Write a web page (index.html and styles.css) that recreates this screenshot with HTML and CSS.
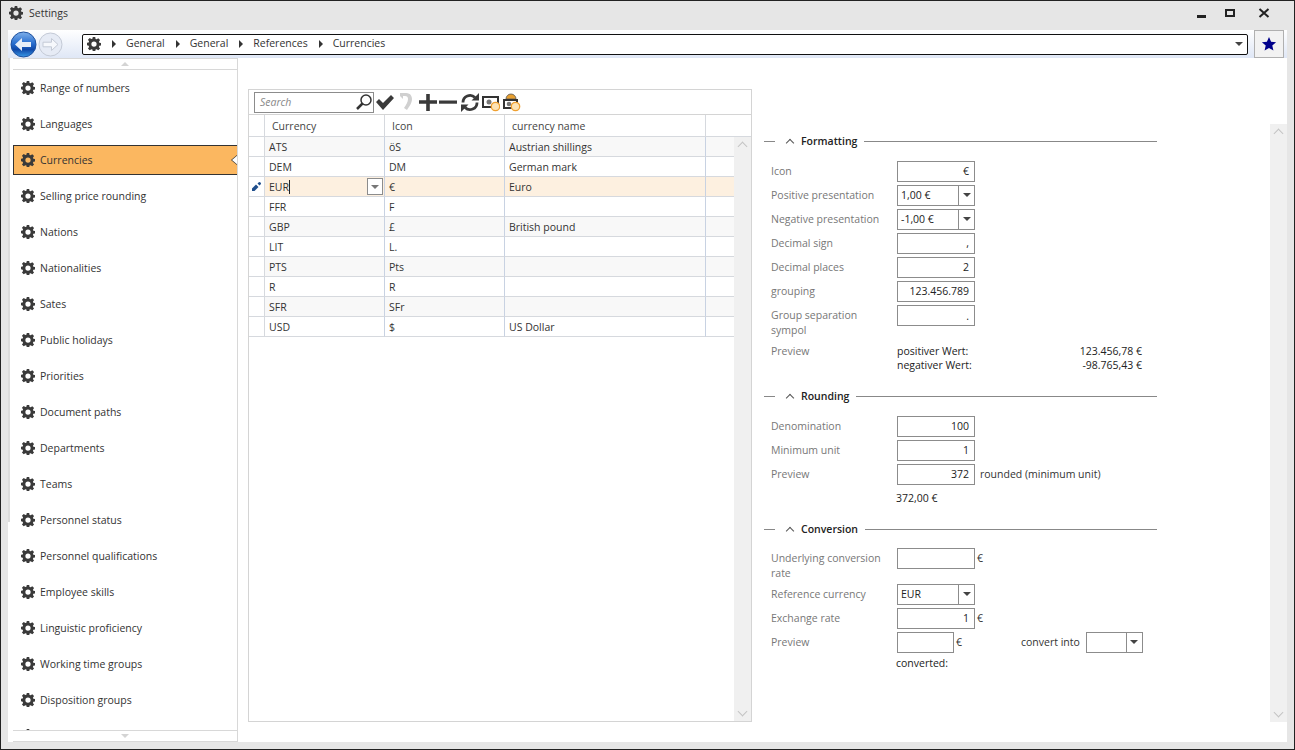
FILE: index.html
```html
<!doctype html>
<html><head>
<meta charset="UTF-8">
<title>Settings</title>
<link rel="stylesheet" href="styles.css">
</head>
<body>
<svg class="defs" width="0" height="0">
  <symbol id="gear" viewBox="0 0 16 16">
    <path fill="#3a3a3a" fill-rule="evenodd" d="M6.6 0h2.8l.4 2.2 1.2.5L12.900 1.400l2 2-1.300 1.900.5 1.200 2.200.4v2.800l-2.200.4-.5 1.200 1.300 1.900-2 2-1.900-1.300-1.200.5-.4 2.200H6.600l-.4-2.200-1.200-.5-1.900 1.300-2-2 1.300-1.900-.5-1.200L-.3 9.400V6.600l2.200-.4.5-1.200L1.100 3.100l2-2L5 2.400l1.200-.5zM8 5a3 3 0 1 0 0 6 3 3 0 0 0 0-6z"/>
  </symbol>
</svg>
<div class="window">
  <div class="titlebar">
    <svg class="gear"><use href="#gear"/></svg>
    <span class="title">Settings</span>
    <div class="winbtns">
      <span class="min"></span>
      <span class="max"></span>
      <svg class="close" width="12" height="10" viewBox="0 0 12 10"><path d="M1.500 1l9 8M10.500 1l-9 8" stroke="#222" stroke-width="2" fill="none"/></svg>
    </div>
  </div>

  <div class="client">
    <div class="navbar">
      <svg class="navbtn" width="27" height="27" viewBox="0 0 27 27">
        <defs><linearGradient id="blue" x1="0" y1="0" x2="0" y2="1"><stop offset="0" stop-color="#7fb0ea"/><stop offset=".45" stop-color="#2a6fd0"/><stop offset=".7" stop-color="#0f48a8"/><stop offset="1" stop-color="#3a9ae8"/></linearGradient></defs>
        <circle cx="13.500" cy="13.500" r="12.500" fill="url(#blue)" stroke="#1c4f9e"/>
        <path d="M5 13.500l7-6.500v4h9v5h-9v4z" fill="#e8eef8"/>
      </svg>
      <svg class="navbtn" width="25" height="25" viewBox="0 0 25 25">
        <circle cx="12.500" cy="12.500" r="11.500" fill="#e6ebf5" stroke="#c4cad6"/>
        <path d="M20 12.500l-6.500-6v3.700H5v4.600h8.500v3.700z" fill="#f6f8fc" stroke="#c4cad6"/>
      </svg>
      <div class="address">
        <svg class="gear"><use href="#gear"/></svg>
        <span class="arrow"></span><span class="crumb">General</span>
        <span class="arrow"></span><span class="crumb">General</span>
        <span class="arrow"></span><span class="crumb">References</span>
        <span class="arrow"></span><span class="crumb">Currencies</span>
        <span class="caret addr-caret"></span>
      </div>
      <div class="favbtn">
        <svg width="16" height="16" viewBox="0 0 16 16"><path d="M8 1l2.100 4.700 5 .5-3.800 3.300 1.100 5L8 11.900l-4.400 2.600 1.100-5L.9 6.200l5-.5z" fill="#00008b"/></svg>
      </div>
    </div>

    <div class="main">
      <aside class="sidebar">
        <div class="scrollbtn"><span class="tri-up"></span></div>
        <ul class="menu">
          <li><svg class="gear"><use href="#gear"/></svg>Range of numbers</li>
          <li><svg class="gear"><use href="#gear"/></svg>Languages</li>
          <li class="active"><svg class="gear"><use href="#gear"/></svg>Currencies</li>
          <li><svg class="gear"><use href="#gear"/></svg>Selling price rounding</li>
          <li><svg class="gear"><use href="#gear"/></svg>Nations</li>
          <li><svg class="gear"><use href="#gear"/></svg>Nationalities</li>
          <li><svg class="gear"><use href="#gear"/></svg>Sates</li>
          <li><svg class="gear"><use href="#gear"/></svg>Public holidays</li>
          <li><svg class="gear"><use href="#gear"/></svg>Priorities</li>
          <li><svg class="gear"><use href="#gear"/></svg>Document paths</li>
          <li><svg class="gear"><use href="#gear"/></svg>Departments</li>
          <li><svg class="gear"><use href="#gear"/></svg>Teams</li>
          <li><svg class="gear"><use href="#gear"/></svg>Personnel status</li>
          <li><svg class="gear"><use href="#gear"/></svg>Personnel qualifications</li>
          <li><svg class="gear"><use href="#gear"/></svg>Employee skills</li>
          <li><svg class="gear"><use href="#gear"/></svg>Linguistic proficiency</li>
          <li><svg class="gear"><use href="#gear"/></svg>Working time groups</li>
          <li><svg class="gear"><use href="#gear"/></svg>Disposition groups</li>
          <li><svg class="gear"><use href="#gear"/></svg></li>
        </ul>
        <div class="scrollbtn bottom"><span class="tri-down"></span></div>
      </aside>

      <section class="gridpane">
        <div class="toolbar">
          <div class="search"><span>Search</span>
            <svg width="18" height="18" viewBox="0 0 18 18"><circle cx="11" cy="7" r="5" fill="none" stroke="#333" stroke-width="1.500"/><path d="M7.500 10.500L2 16" stroke="#333" stroke-width="2.500"/></svg>
          </div>
          <svg width="20" height="20" viewBox="0 0 20 20"><path d="M1 10l3-3 4 4 8-8 3 3-11 12z" fill="#3a3a3a"/></svg>
          <svg width="20" height="20" viewBox="0 0 20 20"><path d="M4 4l0-3 3 0 0 0 3 0c5 0 6 4 6 6 0 4-3 8-5 11l-3-2c2-3 4-6 4-9 0-2-1-3-3-3H7v3z" fill="#d0d0d0"/></svg>
          <svg width="20" height="20" viewBox="0 0 20 20"><path d="M9.200 2h3.600v6.200H20v3.600h-7.200V19H9.200v-7.200H2V8.200h7.200z" fill="#3a3a3a"/></svg>
          <svg width="20" height="20" viewBox="0 0 20 20"><rect x="1" y="8.500" width="18" height="3.200" fill="#3a3a3a"/></svg>
          <svg width="20" height="20" viewBox="0 0 20 20"><path d="M4 10.500a7 7 0 0 1 12-5M18 10.500a7 7 0 0 1-12 5" fill="none" stroke="#3a3a3a" stroke-width="2.800"/><path d="M20 1v7.500h-7.500zM2 20v-7.500h7.500z" fill="#3a3a3a"/></svg>
          <svg width="20" height="20" viewBox="0 0 20 20"><rect x="3" y="5" width="15" height="10" fill="#fff" stroke="#333" stroke-width="2"/><circle cx="9" cy="10" r="2.500" fill="#777"/><circle cx="15.500" cy="14.500" r="4.200" fill="#fde3b5" stroke="#f0a030" stroke-width="1.300"/></svg>
          <svg width="20" height="22" viewBox="0 0 20 22"><path d="M5 8a5 5 0 0 1 10 0z" fill="#e8a030" stroke="#555" stroke-width=".8"/><rect x="3" y="9" width="13" height="8" fill="#fff" stroke="#333" stroke-width="2"/><circle cx="8" cy="13" r="2.300" fill="#777"/><circle cx="14.500" cy="15.500" r="4.200" fill="#fde3b5" stroke="#f0a030" stroke-width="1.300"/></svg>
        </div>
        <div class="grid">
          <div class="row head">
            <div class="sel"></div><div class="c1">Currency</div><div class="c2">Icon</div><div class="c3">currency name</div><div class="c4"></div>
          </div>
          <div class="rows">
            <div class="row alt"><div class="sel"></div><div class="c1">ATS</div><div class="c2">öS</div><div class="c3">Austrian shillings</div><div class="c4"></div></div>
            <div class="row"><div class="sel"></div><div class="c1">DEM</div><div class="c2">DM</div><div class="c3">German mark</div><div class="c4"></div></div>
            <div class="row current"><div class="sel"><svg width="9" height="9" viewBox="0 0 9 9"><path d="M0 9V6.500l4-4L6.500 5l-4 4zM5.500 1.500L6.500.5a1 1 0 0 1 2 2l-1 1z" fill="#1f4e8c"/></svg></div><div class="c1 editing"><span class="edit-text">EUR</span><span class="cell-btn"><span class="caret"></span></span></div><div class="c2">€</div><div class="c3">Euro</div><div class="c4"></div></div>
            <div class="row"><div class="sel"></div><div class="c1">FFR</div><div class="c2">F</div><div class="c3"></div><div class="c4"></div></div>
            <div class="row alt"><div class="sel"></div><div class="c1">GBP</div><div class="c2">£</div><div class="c3">British pound</div><div class="c4"></div></div>
            <div class="row"><div class="sel"></div><div class="c1">LIT</div><div class="c2">L.</div><div class="c3"></div><div class="c4"></div></div>
            <div class="row alt"><div class="sel"></div><div class="c1">PTS</div><div class="c2">Pts</div><div class="c3"></div><div class="c4"></div></div>
            <div class="row"><div class="sel"></div><div class="c1">R</div><div class="c2">R</div><div class="c3"></div><div class="c4"></div></div>
            <div class="row alt"><div class="sel"></div><div class="c1">SFR</div><div class="c2">SFr</div><div class="c3"></div><div class="c4"></div></div>
            <div class="row"><div class="sel"></div><div class="c1">USD</div><div class="c2">$</div><div class="c3">US Dollar</div><div class="c4"></div></div>
          </div>
          <div class="vscroll grid-scroll"><span class="chev up"></span><span class="chev down"></span></div>
        </div>
      </section>

      <section class="detail">
        <div class="group-head first"><span class="dash"></span><span class="chev-open"></span><b>Formatting</b><span class="rule"></span></div>
        <div class="form">
          <div class="frow"><label>Icon</label><div class="field num">€</div></div>
          <div class="frow"><label>Positive presentation</label><div class="combo"><span>1,00 €</span><i><span class="caret"></span></i></div></div>
          <div class="frow"><label>Negative presentation</label><div class="combo"><span>-1,00 €</span><i><span class="caret"></span></i></div></div>
          <div class="frow"><label>Decimal sign</label><div class="field num">,</div></div>
          <div class="frow"><label>Decimal places</label><div class="field num">2</div></div>
          <div class="frow"><label>grouping</label><div class="field num">123.456.789</div></div>
          <div class="frow tall"><label>Group separation sympol</label><div class="field num">.</div></div>
          <div class="frow preview"><label>Preview</label>
            <div class="prev-table">
              <div><span>positiver Wert:</span><span>123.456,78 €</span></div>
              <div><span>negativer Wert:</span><span>-98.765,43 €</span></div>
            </div>
          </div>
        </div>

        <div class="group-head"><span class="dash"></span><span class="chev-open"></span><b>Rounding</b><span class="rule"></span></div>
        <div class="form">
          <div class="frow"><label>Denomination</label><div class="field num">100</div></div>
          <div class="frow"><label>Minimum unit</label><div class="field num">1</div></div>
          <div class="frow"><label>Preview</label><div class="field num">372</div><span class="after">rounded (minimum unit)</span></div>
          <div class="frow result"><label></label><span>372,00 €</span></div>
        </div>

        <div class="group-head"><span class="dash"></span><span class="chev-open"></span><b>Conversion</b><span class="rule"></span></div>
        <div class="form conv">
          <div class="frow tall"><label>Underlying conversion rate</label><div class="field"></div><span class="after cur">€</span></div>
          <div class="frow"><label>Reference currency</label><div class="combo"><span>EUR</span><i><span class="caret"></span></i></div></div>
          <div class="frow"><label>Exchange rate</label><div class="field num">1</div><span class="after cur">€</span></div>
          <div class="frow"><label>Preview</label><div class="field short"></div><span class="after cur">€</span><span class="convert">convert into</span><div class="combo small"><span></span><i><span class="caret"></span></i></div></div>
          <div class="frow result converted"><label></label><span>converted:</span></div>
        </div>
      </section>
      <div class="vscroll page-scroll"><span class="chev up"></span><span class="chev down"></span></div>
    </div>
  </div>
</div>
</body>
</html>
```

FILE: styles.css
```css
* {
    box-sizing: border-box;
}
html, body {
    margin: 0;
    height: 100%;
    overflow: hidden;
}
body {
    font-family: "Open Sans", "Noto Sans", sans-serif;
    font-size: 10.5px;
    color: #333;
}
.defs {
    position: absolute;
}
.gear {
    width: 14px;
    height: 14px;
    flex: none;
}
.window {
    width: 1295px;
    height: 750px;
    border: 1px solid #222;
    background: #e6e6e6;
    display: flex;
    flex-direction: column;
    padding-bottom: 7px;
}
.titlebar {
    height: 29px;
    flex: none;
    display: flex;
    align-items: center;
    padding: 0 0 5px 8px;
    gap: 6px;
}
.winbtns {
    margin-left: auto;
    display: flex;
    align-items: center;
    padding-right: 24px;
}
.min {
    width: 9px;
    height: 3px;
    background: #222;
    margin-top: 7px;
}
.max {
    width: 10px;
    height: 8px;
    border: 2px solid #222;
    margin-left: 19px;
}
.close {
    margin-left: 23px;
}
.client {
    flex: 1;
    min-height: 0;
    margin: 0 7px;
    background: #fff;
    display: flex;
    flex-direction: column;
}
.navbar {
    height: 28px;
    flex: none;
    background: linear-gradient(#fff, #dfe7f6);
    display: flex;
    align-items: center;
    padding-left: 2px;
}
.navbtn {
    flex: none;
    margin-right: 1px;
}
.address {
    margin-left: 18px;
    width: 1166px;
    height: 21px;
    border: 1px solid #111;
    border-radius: 2px;
    background: #fff;
    display: flex;
    align-items: center;
    padding-left: 4px;
}
.crumb {
    padding-bottom: 2px;
}
.arrow {
    width: 0;
    height: 0;
    border-left: 4px solid #333;
    border-top: 4px solid transparent;
    border-bottom: 4px solid transparent;
    margin: 0 10px 0 11px;
}
.caret {
    display: inline-block;
    width: 0;
    height: 0;
    border-top: 4px solid #444;
    border-left: 4px solid transparent;
    border-right: 4px solid transparent;
}
.addr-caret {
    margin-left: auto;
    margin-right: 4px;
}
.favbtn {
    width: 30px;
    height: 28px;
    margin-left: 6px;
    border: 1px solid #b0b0b0;
    background: #f2f2f2;
    display: flex;
    align-items: center;
    justify-content: center;
}
.main {
    flex: 1;
    min-height: 0;
    display: flex;
    position: relative;
}
/* the thin strip at the far left is the list's scroll thumb */
.sidebar {
    width: 230px;
    padding-left: 5px;
    flex: none;
    display: flex;
    flex-direction: column;
    background: linear-gradient(#dcdcdc, #dcdcdc) no-repeat 0 0 / 2px 464px;
}
.scrollbtn {
    height: 12px;
    flex: none;
    border: 1px solid #d8d8d8;
    border-left: 0;
    display: flex;
    align-items: center;
    justify-content: center;
}
.tri-up, .tri-down {
    width: 0;
    height: 0;
    border-left: 4px solid transparent;
    border-right: 4px solid transparent;
}
.tri-up {
    border-bottom: 4px solid #d4d4d4;
}
.tri-down {
    border-top: 4px solid #d4d4d4;
}
.menu {
    list-style: none;
    margin: 0;
    padding: 0;
    flex: 1;
    min-height: 0;
    overflow: hidden;
    border-right: 1px solid #d8d8d8;
}
.menu li {
    height: 36px;
    display: flex;
    align-items: center;
    gap: 5px;
    padding: 0 0 0 7px;
    border: 1px solid transparent;
}
.menu li.active {
    height: 30px;
    margin: 3px -1px 3px 0;
    background: #fbb760;
    border-color: #333;
    position: relative;
}
.menu li.active::before, .menu li.active::after {
    content: "";
    position: absolute;
    top: 9px;
    border-top: 5px solid transparent;
    border-bottom: 5px solid transparent;
}
.menu li.active::before {
    right: 0;
    border-right: 6px solid #333;
}
.menu li.active::after {
    right: -1px;
    border-right: 6px solid #fff;
}
.gridpane {
    width: 504px;
    margin: 31px 0 20px 10px;
    flex: none;
    border: 1px solid #d4d4d4;
    display: flex;
    flex-direction: column;
}
.toolbar {
    height: 25px;
    flex: none;
    display: flex;
    align-items: center;
    padding-left: 5px;
    gap: 1px;
    border-bottom: 1px solid #d4d4d4;
}
.search {
    width: 120px;
    height: 21px;
    border: 1px solid #8c8c8c;
    display: flex;
    align-items: center;
    justify-content: space-between;
    padding-left: 5px;
    font-style: italic;
    color: #888;
}
.grid {
    flex: 1;
    min-height: 0;
    position: relative;
}
.row {
    display: flex;
    height: 20px;
}
.row > div {
    display: flex;
    align-items: center;
    padding-left: 4px;
    border-right: 1px solid #c8d2e2;
    border-bottom: 1px solid #d6d9de;
    white-space: nowrap;
}
.row .sel {
    width: 16px;
    padding: 0;
    justify-content: center;
    border-right-color: #d6d9de;
}
.row .c1, .row .c2 {
    width: 120px;
}
.row .c3 {
    width: 201px;
}
.row .c4 {
    width: 29px;
}
.head {
    height: 22px;
}
.head > div {
    padding-left: 7px;
    color: #444;
    border-right-color: #d6d9de;
}
.head .sel {
    padding-left: 0;
}
.head .c4 {
    flex: 1;
    border-right: 0;
}
.alt > div:not(.sel) {
    background: #f8f8f8;
}
.current > div:not(.sel) {
    background: #fdf0e0;
}
.current .editing {
    background: #fddfb2;
    justify-content: space-between;
    padding-right: 1px;
}
.edit-text {
    border-right: 1px solid #222;
    line-height: 14px;
}
.cell-btn {
    width: 16px;
    height: 17px;
    background: #fff;
    border: 1px solid #8c8c8c;
    display: flex;
    align-items: center;
    justify-content: center;
}
.cell-btn .caret {
    border-top-color: #777;
}
.vscroll {
    background: #f0f0f0;
    width: 17px;
    display: flex;
    flex-direction: column;
    justify-content: space-between;
    align-items: center;
    padding: 6px 0;
}
.grid-scroll {
    position: absolute;
    right: 0;
    top: 22px;
    bottom: 0;
}
.page-scroll {
    position: absolute;
    right: 0;
    top: 66px;
    bottom: 20px;
}
.chev {
    width: 7px;
    height: 7px;
    border-left: 1px solid #c4c4c4;
    border-top: 1px solid #c4c4c4;
}
.chev.up {
    transform: rotate(45deg);
}
.chev.down {
    transform: rotate(225deg);
}
.detail {
    width: 393px;
    margin: 74px 0 0 12px;
    flex: none;
}
.group-head {
    display: flex;
    align-items: center;
    height: 18px;
    margin-top: 11px;
}
.group-head.first {
    margin-top: 0;
}
.group-head b {
    font-weight: 600;
    color: #222;
    margin-right: 7px;
}
.dash {
    width: 11px;
    height: 1px;
    background: #888;
}
.chev-open {
    width: 6px;
    height: 6px;
    border-left: 1.500px solid #555;
    border-top: 1.500px solid #555;
    transform: rotate(45deg);
    margin: 3px 8px 0 12px;
}
.rule {
    flex: 1;
    height: 1px;
    background: #888;
}
.form {
    padding: 9px 0 0 7px;
}
.form.conv {
    padding-top: 8px;
}
.frow {
    display: flex;
    align-items: center;
    height: 24px;
}
.frow label {
    width: 126px;
    padding-right: 8px;
    flex: none;
    color: #777;
    line-height: 15px;
}
.frow.tall {
    height: 36px;
    align-items: flex-start;
}
.frow.tall label {
    padding-top: 5px;
}
.frow.tall .field {
    margin-top: 2px;
}
.frow.tall .after {
    margin-top: 5px;
}
.field, .combo {
    width: 78px;
    height: 21px;
    border: 1px solid #8c8c8c;
    background: #fff;
    display: flex;
    align-items: center;
    flex: none;
    color: #222;
}
.field.num {
    justify-content: flex-end;
    padding-right: 5px;
}
.field.short {
    width: 57px;
}
.combo > span {
    flex: 1;
    padding-left: 3px;
}
.combo i {
    width: 16px;
    height: 100%;
    border-left: 1px solid #8c8c8c;
    display: flex;
    align-items: center;
    justify-content: center;
}
.combo.small {
    width: 57px;
}
.after {
    margin-left: 5px;
}
.after.cur {
    margin-left: 2px;
}
.convert {
    margin-left: 59px;
    margin-right: 6px;
}
.preview {
    align-items: flex-start;
    height: 37px;
    padding-top: 5px;
}
.prev-table {
    width: 245px;
    line-height: 14px;
    color: #222;
}
.prev-table div {
    display: flex;
    justify-content: space-between;
}
.result {
    height: 23px;
    color: #222;
}
.result span {
    margin-left: -1px;
}
.converted {
    height: 18px;
}
```
